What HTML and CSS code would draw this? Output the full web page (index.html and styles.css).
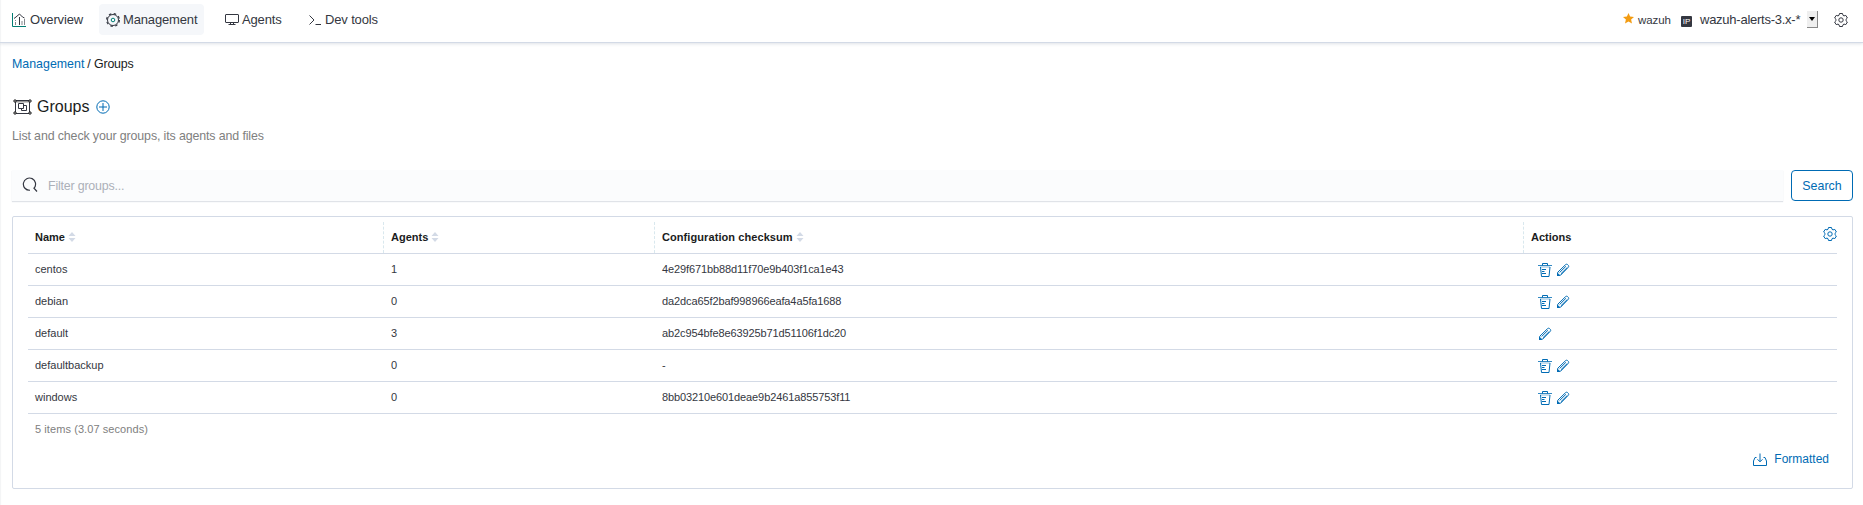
FILE: index.html
```html
<!DOCTYPE html>
<html lang="en">
<head>
<meta charset="utf-8">
<title>Groups</title>
<link rel="stylesheet" href="styles.css">
</head>
<body>
<svg class="defs" width="0" height="0" aria-hidden="true">
  <symbol id="gear" viewBox="0 0 14 14"><path d="M5.500.5h3l.5 1.800 1 .6 1.800-.5 1.600 2.600L12 6.300v1.400l1.400 1.300-1.600 2.600-1.800-.5-1 .6-.5 1.800h-3L5 11.700l-1-.6-1.800.5L.6 9 2 7.700V6.300L.6 5l1.600-2.600 1.800.5 1-.6z"/><circle cx="7" cy="7" r="2.200"/></symbol>
  <symbol id="trash" viewBox="0 0 14 14"><path d="M4.500 2.500v-2h5v2"/><path d="M0 2.500h14" opacity=".8"/><path d="M2 4h10" opacity=".45"/><path d="M2.500 4l1 9.500h7.500L12 4M4 6.500h4M4 8.500h2.500M4 10.500h4"/></symbol>
  <symbol id="pencil" viewBox="0 0 14 14"><path d="M1.500 12.500l.3-3.300 7.700-7.500c.6-.6 1.500-.7 2.100-.1l.7.700c.6.6.5 1.500-.1 2.100l-7.500 7.700zM3.600 9.500l6.300-6.200M5 10.700l6.300-6.200"/><path class="solid" d="M1 13V9.500l3.500 3.200z"/></symbol>
  <symbol id="sort" viewBox="0 0 8 10"><path d="M4 0l3.500 4h-7zM4 10L.5 6h7z"/></symbol>
</svg>

<header class="topbar">
  <nav class="nav">
    <a class="tab tab-overview"><svg class="icon" width="14" height="14" viewBox="0 0 14 14"><path class="teal" d="M.5 0v13.500H14"/><path class="faint" d="M3.500 7v1M3.500 9v3M12.500 6v6M10 8v4"/><path d="M7.500 4v8M2 5.500l2-1.500 3.500-3 3 3 2 1"/></svg>Overview</a>
    <a class="tab tab-active"><svg class="icon" width="14" height="14" viewBox="0 0 14 14"><circle cx="7" cy="7" r="5.500"/><circle class="cog" cx="7" cy="7" r="6.400"/><circle class="teal" cx="7" cy="7" r="1.800"/></svg>Management</a>
    <a class="tab tab-agents"><svg class="icon" width="14" height="14" viewBox="0 0 14 14"><path d="M1 1.500h12q.5 0 .5.500v7q0 .5-.5.500H1q-.5 0-.5-.5V2q0-.5.5-.5zM5.500 9.500v2M8.500 9.500v2M3.500 11.500h7"/></svg>Agents</a>
    <a class="tab tab-dev"><svg class="icon" width="14" height="14" viewBox="0 0 14 14"><path d="M1.500 2.500l4.500 4.500-4.500 4.500M7.500 11.500h5.500"/></svg>Dev tools</a>
  </nav>
  <div class="status">
    <svg class="star" width="11" height="11" viewBox="0 0 11 11"><path d="M5.500 0l1.600 3.600 3.900.4-2.900 2.600.9 4-3.500-2-3.500 2 .9-4L0 4l3.900-.4z"/></svg>
    <span class="api">wazuh</span>
    <span class="ip">IP</span>
    <span class="pattern">wazuh-alerts-3.x-*</span>
    <span class="select-arrow"><svg width="6" height="4" viewBox="0 0 6 4"><path d="M0 0h6L3 4z"/></svg></span>
    <svg class="icon settings" width="14" height="14"><use href="#gear"/></svg>
  </div>
</header>

<main class="page">
  <div class="breadcrumb"><a>Management</a><span>/ Groups</span></div>
  <div class="title">
    <svg class="group-icon" width="19" height="16" viewBox="0 0 19 16"><path class="shade" d="M3 2.500h13"/><path d="M2.500 2v12M16.500 2v12M2 1.500h15M2 14.500h15"/><path d="M5.500 4.500h5v5h-5zM10.500 6.500h3v5h-5v-2"/><path class="corner" d="M1 1h2v2H1zM16 1h2v2h-2zM1 13h2v2H1zM16 13h2v2h-2z"/></svg>
    <h1>Groups</h1>
    <svg class="icon blue" width="14" height="14" viewBox="0 0 14 14"><circle cx="7" cy="7" r="6.200"/><path d="M7 3v8M3 7h8"/></svg>
  </div>
  <p class="desc">List and check your groups, its agents and files</p>

  <div class="search">
    <div class="field">
      <svg class="search-icon" width="16" height="16" viewBox="0 0 16 16"><path d="M8 13.200A6.100 6.100 0 1 1 12 11.200L15 14.500"/></svg>
      <span>Filter groups...</span>
    </div>
    <button class="search-button">Search</button>
  </div>

  <section class="panel">
    <div class="row head">
      <div class="cell">Name<svg class="sort" width="8" height="10"><use href="#sort"/></svg></div>
      <div class="cell">Agents<svg class="sort" width="8" height="10"><use href="#sort"/></svg></div>
      <div class="cell wide">Configuration checksum<svg class="sort" width="8" height="10"><use href="#sort"/></svg></div>
      <div class="cell">Actions<svg class="icon blue table-gear" width="14" height="14"><use href="#gear"/></svg></div>
    </div>
    <div class="row"><div class="cell">centos</div><div class="cell">1</div><div class="cell sum">4e29f671bb88d11f70e9b403f1ca1e43</div><div class="cell actions"><svg class="icon blue" width="14" height="14"><use href="#trash"/></svg><svg class="icon blue" width="14" height="14"><use href="#pencil"/></svg></div></div>
    <div class="row"><div class="cell">debian</div><div class="cell">0</div><div class="cell sum">da2dca65f2baf998966eafa4a5fa1688</div><div class="cell actions"><svg class="icon blue" width="14" height="14"><use href="#trash"/></svg><svg class="icon blue" width="14" height="14"><use href="#pencil"/></svg></div></div>
    <div class="row"><div class="cell">default</div><div class="cell">3</div><div class="cell sum">ab2c954bfe8e63925b71d51106f1dc20</div><div class="cell actions"><svg class="icon blue" width="14" height="14"><use href="#pencil"/></svg></div></div>
    <div class="row"><div class="cell">defaultbackup</div><div class="cell">0</div><div class="cell sum">-</div><div class="cell actions"><svg class="icon blue" width="14" height="14"><use href="#trash"/></svg><svg class="icon blue" width="14" height="14"><use href="#pencil"/></svg></div></div>
    <div class="row"><div class="cell">windows</div><div class="cell">0</div><div class="cell sum">8bb03210e601deae9b2461a855753f11</div><div class="cell actions"><svg class="icon blue" width="14" height="14"><use href="#trash"/></svg><svg class="icon blue" width="14" height="14"><use href="#pencil"/></svg></div></div>
    <div class="count">5 items (3.07 seconds)</div>
    <div class="export"><svg class="icon blue" width="14" height="14" viewBox="0 0 14 14"><path d="M3.500 5.500H2L.5 9v4.500h13V9L12 5.500h-1.500M7 1.500v8M4.500 7.300L7 9.800l2.500-2.500"/></svg><a>Formatted</a></div>
  </section>
</main>
</body>
</html>
```

FILE: styles.css
```css
* { box-sizing: border-box; }
body {
  margin: 0;
  height: 505px;
  overflow: hidden;
  background: #fff;
  box-shadow: inset 2px 0 1px -1px #f3f4f6;
  color: #343741;
  font-family: "Liberation Sans", Arial, sans-serif;
  font-size: 13px;
}
.defs { position: absolute; }
svg { flex: none; display: block; }
.icon { fill: none; stroke: #343741; stroke-width: 1; }
.icon .teal { stroke: #017d73; }
.icon .faint { opacity: .6; }
.icon .cog { stroke-width: 1.2; stroke-dasharray: 2.500 2.526; }
.blue { stroke: #006bb4; color: #006bb4; }
.solid { fill: #006bb4; stroke: none; }

.topbar {
  display: flex;
  justify-content: space-between;
  height: 43px;
  border-bottom: 1px solid #d3dae6;
  box-shadow: 0 1px 3px rgba(152, 162, 179, .3);
}
.nav { display: flex; padding: 4px 0 0 5px; }
.tab {
  display: flex;
  align-items: center;
  height: 31px;
  padding: 0 7px;
  gap: 4px;
  border-radius: 4px;
  letter-spacing: -.15px;
}
.tab-overview { width: 94px; }
.tab-active { width: 105px; background: #f5f7fa; gap: 3px; }
.tab-agents { margin-left: 14px; width: 83px; gap: 3px; }
.tab-dev { gap: 3px; }
.status { display: flex; align-items: center; padding: 0 15px 3px 0; }
.star { fill: #f39c12; margin-right: 4px; margin-top: -2px; }
.api { width: 43px; font-size: 11.5px; letter-spacing: -.1px; }
.ip {
  width: 11px;
  height: 11px;
  margin: 3px 8px 0 0;
  border-radius: 1px;
  background: #343741;
  color: #fff;
  font-size: 8px;
  line-height: 11px;
  text-align: center;
}
.pattern { width: 107px; letter-spacing: -.25px; }
.select-arrow {
  display: flex;
  align-items: center;
  justify-content: center;
  width: 11px;
  height: 17px;
  margin-right: 16px;
  background: #efefef;
  border-right: 1px solid #888;
  border-bottom: 1px solid #888;
}

.page { padding: 0 10px 0 12px; }
.breadcrumb { display: flex; gap: 3px; padding-top: 13px; line-height: 16px; font-size: 12.4px; color: #1a1c21; }
.breadcrumb span { letter-spacing: -.15px; }
a { color: inherit; }
.breadcrumb a, .export a { color: #006bb4; }
.title { display: flex; align-items: center; height: 20px; margin-top: 25px; padding-left: 1px; }
h1 { width: 59px; margin: 0 0 0 5px; font-size: 16px; font-weight: 400; color: #1a1c21; }
.group-icon { fill: none; stroke: #343741; stroke-width: 1; margin-top: -1px; }
.group-icon .shade { stroke: #999; stroke-width: 2; }
.group-icon .corner { fill: #fff; stroke: #222; }
.desc { margin: 11px 0 0; line-height: 16px; font-size: 12.400px; letter-spacing: -.12px; color: #808080; }
.search { display: flex; gap: 8px; margin-top: 26px; height: 31px; }
.field {
  flex: 1;
  display: flex;
  align-items: center;
  gap: 10px;
  padding-left: 10px;
  background: #fbfcfd;
  box-shadow: 0 1px 1px rgba(152, 162, 179, .3);
  color: #acb0b9;
  font-size: 12.400px;
  letter-spacing: -.18px;
}
.search-icon { fill: none; stroke: #343741; stroke-width: 1.200; margin-top: -2px; }
.search-button {
  width: 62px;
  padding: 0;
  border: 1px solid #006bb4;
  border-radius: 4px;
  background: #fff;
  color: #006bb4;
  font: 12.400px "Liberation Sans", Arial, sans-serif;
}
.panel {
  height: 273px;
  margin-top: 15px;
  padding: 5px 15px 0;
  border: 1px solid #d3dae6;
  border-radius: 2px;
}
.row {
  display: grid;
  grid-template-columns: 355px 271px 869px 1fr;
  height: 32px;
  border-bottom: 1px solid #d3dae6;
  font-size: 11px;
}
.cell { display: flex; align-items: center; padding: 0 0 1px 8px; }
.cell:first-child { padding-left: 7px; }
.head { font-weight: bold; color: #1a1c21; }
.head .cell { padding-top: 0; padding-bottom: 2px; }
.head .cell + .cell { border-left: 1px dashed #d9e8ee; padding-left: 7px; }
.head .wide { letter-spacing: .08px; }
.sort { margin-left: 3px; fill: #d3dae6; }
.table-gear { margin: -5px 0 0 auto; }
.sum { letter-spacing: -.11px; }
.actions { gap: 4px; padding: 0 0 0 15px; }
.count { padding: 8px 7px 0; line-height: 15px; font-size: 11px; letter-spacing: .08px; color: #808080; }
.export { display: flex; justify-content: flex-end; align-items: center; gap: 7px; margin-top: 14px; padding-right: 8px; line-height: 16px; font-size: 12px; }
```
